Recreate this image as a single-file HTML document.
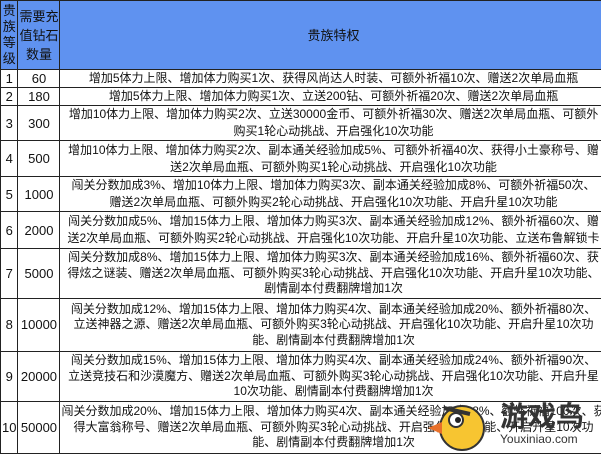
<!DOCTYPE html>
<html><head><meta charset="utf-8"><style>
body{margin:0;background:#fff;width:601px;height:455px;overflow:hidden}
table{position:absolute;left:0;top:0;border-collapse:collapse;font-family:"Liberation Sans","Noto Sans CJK SC",sans-serif;font-size:12px;color:#111;table-layout:fixed}
td{border:1px solid #222;text-align:center;padding:0 1px;line-height:17px;white-space:nowrap;overflow:hidden}
tr.t td{line-height:15.5px}
.h td{background:#5f92f0;font-size:13px;line-height:19px}
.n{font-size:13px}
</style></head><body>
<table>
<colgroup><col style="width:20px"><col style="width:42px"><col style="width:537px"></colgroup>
<tr class="h" style="height:69px"><td style="line-height:16px">贵<br>族<br>等<br>级</td><td>需要充<br>值钻石<br>数量</td><td>贵族特权</td></tr>
<tr style="height:18px"><td class="n">1</td><td class="n">60</td><td>增加5体力上限、增加体力购买1次、获得风尚达人时装、可额外祈福10次、赠送2次单局血瓶</td></tr>
<tr style="height:18px"><td class="n">2</td><td class="n">180</td><td>增加5体力上限、增加体力购买1次、立送200钻、可额外祈福20次、赠送2次单局血瓶</td></tr>
<tr style="height:35px"><td class="n">3</td><td class="n">300</td><td>增加10体力上限、增加体力购买2次、立送30000金币、可额外祈福30次、赠送2次单局血瓶、可额外<br>购买1轮心动挑战、开启强化10次功能</td></tr>
<tr style="height:36px"><td class="n">4</td><td class="n">500</td><td>增加10体力上限、增加体力购买2次、副本通关经验加成5%、可额外祈福40次、获得小土豪称号、赠<br>送2次单局血瓶、可额外购买1轮心动挑战、开启强化10次功能</td></tr>
<tr style="height:34px"><td class="n">5</td><td class="n">1000</td><td>闯关分数加成3%、增加10体力上限、增加体力购买3次、副本通关经验加成8%、可额外祈福50次、<br>赠送2次单局血瓶、可额外购买2轮心动挑战、开启强化10次功能、开启升星10次功能</td></tr>
<tr style="height:37px"><td class="n">6</td><td class="n">2000</td><td>闯关分数加成5%、增加15体力上限、增加体力购买3次、副本通关经验加成12%、额外祈福60次、赠<br>送2次单局血瓶、可额外购买2轮心动挑战、开启强化10次功能、开启升星10次功能、立送布鲁解锁卡</td></tr>
<tr class="t" style="height:50px"><td class="n">7</td><td class="n">5000</td><td>闯关分数加成8%、增加15体力上限、增加体力购买3次、副本通关经验加成16%、额外祈福60次、获<br>得炫之谜装、赠送2次单局血瓶、可额外购买3轮心动挑战、开启强化10次功能、开启升星10次功能、<br>剧情副本付费翻牌增加1次</td></tr>
<tr class="t" style="height:53px"><td class="n">8</td><td class="n">10000</td><td>闯关分数加成12%、增加15体力上限、增加体力购买4次、副本通关经验加成20%、额外祈福80次、<br>立送神器之源、赠送2次单局血瓶、可额外购买3轮心动挑战、开启强化10次功能、开启升星10次功<br>能、剧情副本付费翻牌增加1次</td></tr>
<tr class="t" style="height:50px"><td class="n">9</td><td class="n">20000</td><td>闯关分数加成15%、增加15体力上限、增加体力购买4次、副本通关经验加成24%、额外祈福90次、<br>立送竞技石和沙漠魔方、赠送2次单局血瓶、可额外购买3轮心动挑战、开启强化10次功能、开启升星<br>10次功能、剧情副本付费翻牌增加1次</td></tr>
<tr class="t" style="height:52px"><td class="n">10</td><td class="n">50000</td><td>闯关分数加成20%、增加15体力上限、增加体力购买4次、副本通关经验加成28%、额外祈福100次、获<br>得大富翁称号、赠送2次单局血瓶、可额外购买3轮心动挑战、开启强化10次功能、开启升星10次功<br>能、剧情副本付费翻牌增加1次</td></tr>
</table>
<svg style="position:absolute;left:400px;top:388px" width="200" height="66">
<circle cx="62" cy="40" r="22" fill="#f7c531" stroke="#333" stroke-width="2"/>
<polygon points="42,34 28,40 42,46" fill="#e8702a"/>
<circle cx="56" cy="32" r="7" fill="#fff" stroke="#333" stroke-width="2"/>
<circle cx="58" cy="32" r="3" fill="#222"/>
<path d="M44 20 L70 26" stroke="#333" stroke-width="4"/>
<text x="100" y="38" font-family="Noto Sans CJK SC,sans-serif" font-size="28" font-weight="bold" fill="#333">游戏鸟</text>
<text x="100" y="55" font-family="Liberation Sans,sans-serif" font-size="12" fill="#333">Youxiniao.com</text>
</svg>
</body></html>
